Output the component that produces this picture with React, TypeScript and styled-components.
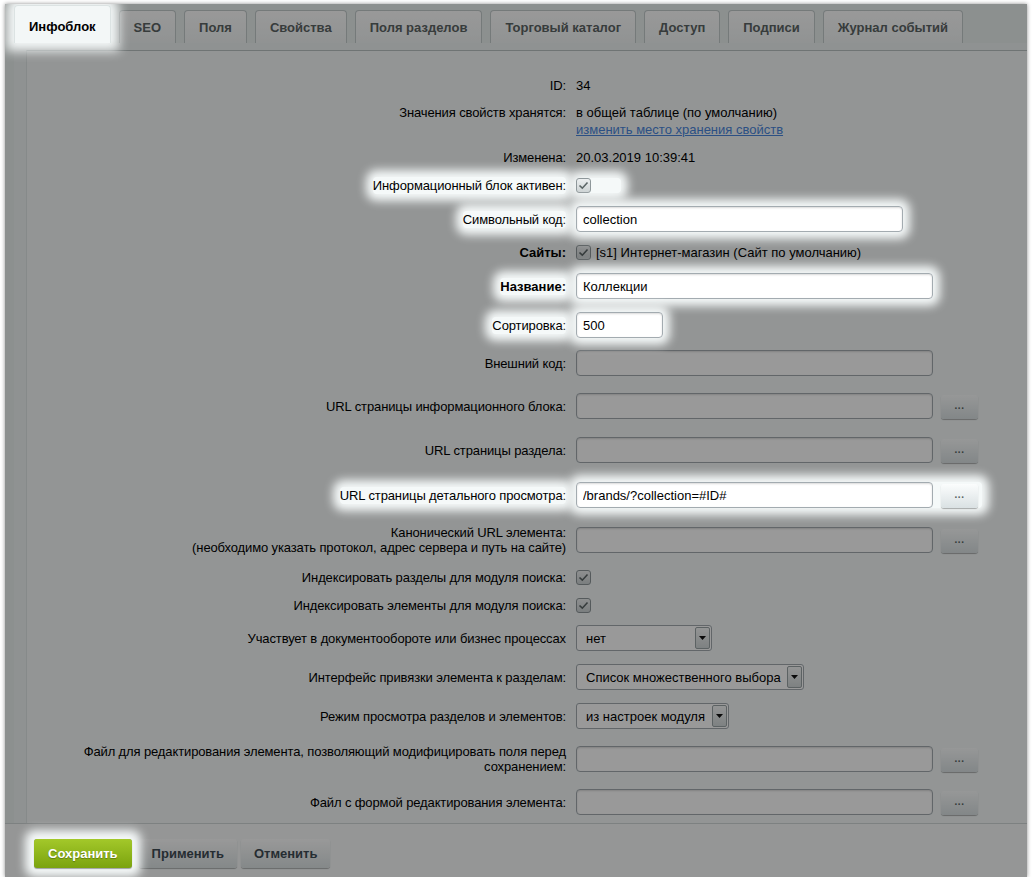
import React from 'react'
import styled, { createGlobalStyle, css } from 'styled-components'

const GlobalStyle = createGlobalStyle`
  html, body {
    margin: 0;
    padding: 0;
    background: #ffffff;
  }
  body {
    font-family: "Liberation Sans", Arial, sans-serif;
    font-size: 13px;
    color: #000;
  }
`

const Frame = styled.div`
  position: relative;
  margin: 4px 0 0 5px;
  width: 1022px;
  height: 873px;
  background: #e9f0ef;
  box-shadow: 0 0 4px rgba(0, 0, 0, 0.45);
  display: flex;
  flex-direction: column;
  overflow: hidden;
`

// grey veil over the whole screen; highlighted parts sit above it
const Dim = styled.div`
  position: absolute;
  inset: 0;
  background: rgba(0, 0, 0, 0.4);
  z-index: 1;
  pointer-events: none;
`

const TabBar = styled.div`
  display: flex;
  align-items: flex-end;
  gap: 8px;
  height: 39px;
  padding-left: 9px;
  flex-shrink: 0;
`

const Tab = styled.div<{ $active?: boolean }>`
  box-sizing: border-box;
  height: 33px;
  padding: 0 14px;
  display: flex;
  align-items: center;
  border: 1px solid #c3cbcc;
  border-bottom: none;
  border-radius: 4px 4px 0 0;
  background: linear-gradient(#ffffff, #f1f5f5);
  font-weight: bold;
  font-size: 13px;
  color: #5c6464;
  white-space: nowrap;

  ${p => p.$active && css`
    position: relative;
    z-index: 2;
    height: 38px;
    padding-top: 3px;
    background: #f3f7f7;
    border-color: #dce3e3;
    color: #000;
    box-shadow: 0 0 11px 8px #f3f7f7;
  `}
`

const Panel = styled.div`
  flex: 1;
  display: flex;
  flex-direction: column;
  margin-left: 9px;
  padding: 7px 0 0 12px;
  background: #eef3f3;
`

const Content = styled.div`
  flex: 1;
  background: #f5f9f9;
  border-top: 1px solid #b9c1c1;
  border-left: 1px solid #dfe6e6;
  padding-top: 20px;
`

const Row = styled.div<{ $h: number; $top?: boolean }>`
  box-sizing: border-box;
  display: grid;
  grid-template-columns: 539px 1fr;
  height: ${p => p.$h}px;
  align-items: ${p => (p.$top ? 'start' : 'center')};
  padding-top: ${p => (p.$top ? 5 : 0)}px;
`

const Label = styled.div<{ $bold?: boolean; $multi?: boolean }>`
  text-align: right;
  line-height: ${p => (p.$multi ? 15 : 17)}px;
  font-weight: ${p => (p.$bold ? 'bold' : 'normal')};
  letter-spacing: ${p => (p.$bold ? 0 : -0.12)}px;
`

const Value = styled.div`
  padding-left: 10px;
  display: flex;
  align-items: center;
  gap: 8px;
  line-height: 17px;
`

const Stack = styled.div`
  display: flex;
  flex-direction: column;
`

const Link = styled.a`
  color: #4a86dc;
  text-decoration: underline;
`

const Spot = styled.span<{ $padR?: number }>`
  position: relative;
  z-index: 2;
  display: inline-flex;
  align-items: center;
  gap: 8px;
  background: #f5f9f9;
  border-radius: 4px;
  padding-right: ${p => p.$padR ?? 0}px;
  box-shadow: 0 0 10px 7px #f5f9f9;
`

const Field = styled.input<{ $w: number }>`
  box-sizing: border-box;
  width: ${p => p.$w}px;
  height: 26px;
  margin: 0;
  padding: 0 6px;
  border: 1px solid #a3abb0;
  border-radius: 4px;
  background: #ffffff;
  box-shadow: inset 0 1px 2px rgba(0, 0, 0, 0.15);
  font: 13px "Liberation Sans", Arial, sans-serif;
  color: #000;
  outline: none;
`

const Dots = styled.button`
  width: 37px;
  height: 24px;
  margin-top: 2px;
  padding: 0 0 3px;
  border: none;
  border-radius: 3px;
  background: linear-gradient(#fbfdfd, #dae1e3);
  box-shadow: 0 1px 1px rgba(0, 0, 0, 0.3);
  font: bold 10px "Liberation Sans", Arial, sans-serif;
  color: #56615f;
  letter-spacing: 0.5px;
`

const Check = styled.span`
  box-sizing: border-box;
  width: 15px;
  height: 15px;
  border: 1px solid #8e979a;
  border-radius: 3px;
  background: linear-gradient(#eceff0, #cdd3d4);
  display: inline-flex;
  align-items: center;
  justify-content: center;
`

const Select = styled.div<{ $w: number }>`
  box-sizing: border-box;
  width: ${p => p.$w}px;
  height: 26px;
  border: 1px solid #a3abb0;
  border-radius: 3px;
  background: #ffffff;
  display: flex;
  align-items: center;
  padding-left: 9px;
`

const SelectText = styled.span`
  flex: 1;
  white-space: nowrap;
`

const Arrow = styled.span`
  box-sizing: border-box;
  width: 15px;
  height: 22px;
  margin-right: 1px;
  border: 1px solid #9aa3a6;
  border-radius: 2px;
  background: linear-gradient(#f6f8f8, #d2d8d9);
  display: inline-flex;
  align-items: center;
  justify-content: center;
`

const Footer = styled.div`
  box-sizing: border-box;
  height: 54px;
  flex-shrink: 0;
  border-top: 1px solid #d0d8d8;
  background: #f8fbfb;
  display: flex;
  align-items: flex-start;
  gap: 4px;
  padding: 15px 0 0 29px;
`

const Btn = styled.button<{ $primary?: boolean }>`
  height: 29px;
  padding: 0 13px;
  border: none;
  border-radius: 3px;
  font: bold 13px "Liberation Sans", Arial, sans-serif;
  background: linear-gradient(#ffffff, #dde4e5);
  color: #3f4b54;
  box-shadow: 0 1px 1px rgba(0, 0, 0, 0.3);

  ${p => p.$primary && css`
    position: relative;
    z-index: 2;
    margin-right: 3px;
    padding: 0 14px;
    background: linear-gradient(#a3c82a, #7ba30e);
    color: #ffffff;
    text-shadow: 0 1px 1px rgba(0, 0, 0, 0.3);
    box-shadow: 0 1px 1px rgba(0, 0, 0, 0.35), 0 0 10px 9px #f5f9f9;
  `}
`

const Tick = () => (
  <Check>
    <svg width="11" height="9" viewBox="0 0 11 9">
      <path d="M1.5 4.5 L4.3 7.2 L9.5 1.5" fill="none" stroke="#5b6566" strokeWidth="1.6" />
    </svg>
  </Check>
)

const DropDown = ({ w, text }: { w: number; text: string }) => (
  <Select $w={w}>
    <SelectText>{text}</SelectText>
    <Arrow>
      <svg width="7" height="4" viewBox="0 0 7 4">
        <path d="M0 0 H7 L3.5 4 Z" fill="#111" />
      </svg>
    </Arrow>
  </Select>
)

const tabs = ['SEO', 'Поля', 'Свойства', 'Поля разделов', 'Торговый каталог', 'Доступ', 'Подписи', 'Журнал событий']

export default function App() {
  return (
    <>
      <GlobalStyle />
      <Frame>
        <Dim />
        <TabBar>
          <Tab $active>Инфоблок</Tab>
          {tabs.map(t => (
            <Tab key={t}>{t}</Tab>
          ))}
        </TabBar>
        <Panel>
          <Content>
            <Row $h={28}>
              <Label>ID:</Label>
              <Value>34</Value>
            </Row>
            <Row $h={44} $top>
              <Label>Значения свойств хранятся:</Label>
              <Value>
                <Stack>
                  <span>в общей таблице (по умолчанию)</span>
                  <Link>изменить место хранения свойств</Link>
                </Stack>
              </Value>
            </Row>
            <Row $h={28}>
              <Label>Изменена:</Label>
              <Value>20.03.2019 10:39:41</Value>
            </Row>
            <Row $h={28}>
              <Label><Spot>Информационный блок активен:</Spot></Label>
              <Value><Spot $padR={30}><Tick /></Spot></Value>
            </Row>
            <Row $h={40}>
              <Label><Spot>Символьный код:</Spot></Label>
              <Value><Spot><Field $w={327} defaultValue="collection" readOnly /></Spot></Value>
            </Row>
            <Row $h={26}>
              <Label $bold>Сайты:</Label>
              <Value style={{ gap: 5 }}>
                <Tick />
                <span>[s1] Интернет-магазин (Сайт по умолчанию)</span>
              </Value>
            </Row>
            <Row $h={42}>
              <Label $bold><Spot>Название:</Spot></Label>
              <Value><Spot><Field $w={357} defaultValue="Коллекции" readOnly /></Spot></Value>
            </Row>
            <Row $h={36}>
              <Label><Spot>Сортировка:</Spot></Label>
              <Value><Spot><Field $w={87} defaultValue="500" readOnly /></Spot></Value>
            </Row>
            <Row $h={40}>
              <Label>Внешний код:</Label>
              <Value><Field $w={357} readOnly /></Value>
            </Row>
            <Row $h={46}>
              <Label>URL страницы информационного блока:</Label>
              <Value><Field $w={357} readOnly /><Dots>...</Dots></Value>
            </Row>
            <Row $h={42}>
              <Label>URL страницы раздела:</Label>
              <Value><Field $w={357} readOnly /><Dots>...</Dots></Value>
            </Row>
            <Row $h={48}>
              <Label><Spot>URL страницы детального просмотра:</Spot></Label>
              <Value>
                <Spot $padR={4}>
                  <Field $w={357} defaultValue="/brands/?collection=#ID#" readOnly />
                  <Dots>...</Dots>
                </Spot>
              </Value>
            </Row>
            <Row $h={42}>
              <Label $multi>
                Канонический URL элемента:<br />
                (необходимо указать протокол, адрес сервера и путь на сайте)
              </Label>
              <Value><Field $w={357} readOnly /><Dots>...</Dots></Value>
            </Row>
            <Row $h={32}>
              <Label>Индексировать разделы для модуля поиска:</Label>
              <Value><Tick /></Value>
            </Row>
            <Row $h={24}>
              <Label>Индексировать элементы для модуля поиска:</Label>
              <Value><Tick /></Value>
            </Row>
            <Row $h={42}>
              <Label>Участвует в документообороте или бизнес процессах</Label>
              <Value><DropDown w={136} text="нет" /></Value>
            </Row>
            <Row $h={36}>
              <Label>Интерфейс привязки элемента к разделам:</Label>
              <Value><DropDown w={228} text="Список множественного выбора" /></Value>
            </Row>
            <Row $h={42}>
              <Label>Режим просмотра разделов и элементов:</Label>
              <Value><DropDown w={153} text="из настроек модуля" /></Value>
            </Row>
            <Row $h={44}>
              <Label $multi>
                Файл для редактирования элемента, позволяющий модифицировать поля перед<br />
                сохранением:
              </Label>
              <Value><Field $w={357} readOnly /><Dots>...</Dots></Value>
            </Row>
            <Row $h={42}>
              <Label>Файл с формой редактирования элемента:</Label>
              <Value><Field $w={357} readOnly /><Dots>...</Dots></Value>
            </Row>
          </Content>
        </Panel>
        <Footer>
          <Btn $primary>Сохранить</Btn>
          <Btn>Применить</Btn>
          <Btn>Отменить</Btn>
        </Footer>
      </Frame>
    </>
  )
}
